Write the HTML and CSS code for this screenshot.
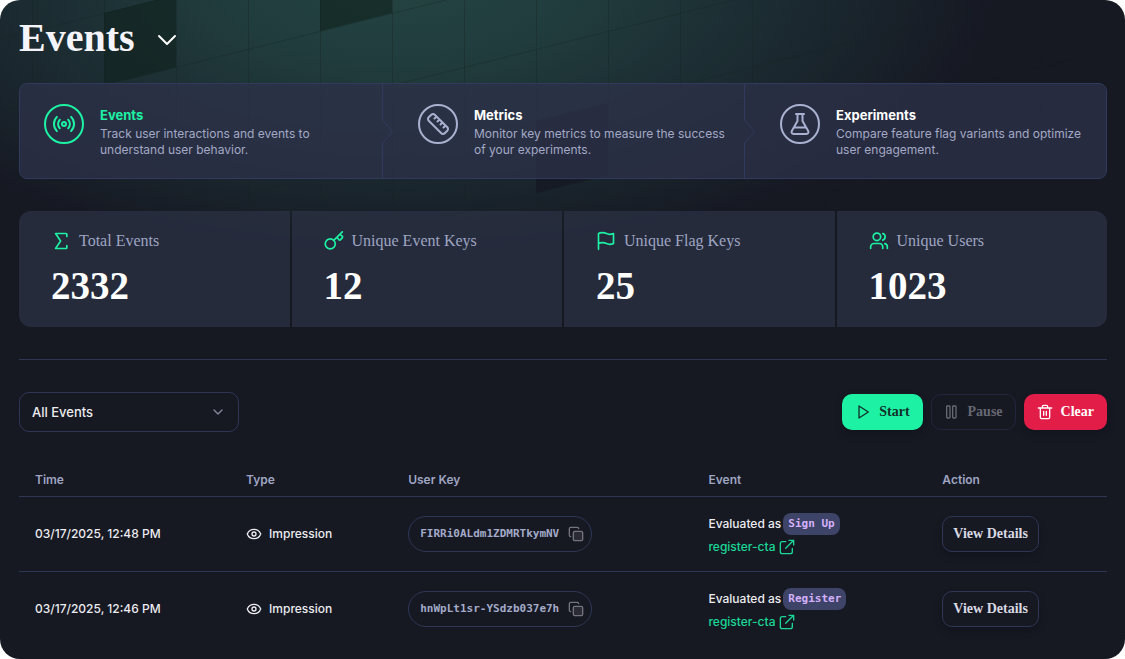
FILE: index.html
```
<!DOCTYPE html>
<html lang="en">
<head>
    <meta charset="UTF-8">
    <meta name="viewport" content="width=device-width, initial-scale=1.0">
    <title>Events</title>
    <link rel="stylesheet" href="styles.css">
</head>
<body>

<!-- Shared icons -->
<svg class="sprite" aria-hidden="true">
    <symbol id="eye" viewBox="0 0 24 24">
        <path d="M2.06 12.35a1 1 0 0 1 0-.7 10.75 10.75 0 0 1 19.88 0 1 1 0 0 1 0 .7 10.75 10.75 0 0 1-19.88 0"/>
        <circle cx="12" cy="12" r="3"/>
    </symbol>
    <symbol id="copy" viewBox="0 0 24 24">
        <rect class="copy-fill" x="8" y="8" width="14" height="14" rx="2"/>
        <path d="M4 16c-1.1 0-2-.9-2-2V4c0-1.1.9-2 2-2h10c1.1 0 2 .9 2 2"/>
    </symbol>
    <symbol id="external" viewBox="0 0 24 24">
        <path d="M10 4H5a3 3 0 0 0-3 3v12a3 3 0 0 0 3 3h12a3 3 0 0 0 3-3v-5M15 2h7v7M22 2 10 14"/>
    </symbol>
    <symbol id="chevron" viewBox="0 0 24 24">
        <path d="m6 9 6 6 6-6"/>
    </symbol>
</svg>

<div class="page">
    <svg class="backdrop" aria-hidden="true">
        <defs>
            <pattern id="grid" x="32" y="39" width="72" height="72" patternUnits="userSpaceOnUse" patternTransform="matrix(1 -0.25 0 1 0 0)">
                <path d="M0 72V0H72" fill="none"/>
            </pattern>
        </defs>
        <rect width="100%" height="100%" fill="url(#grid)"/>
        <g class="tiles" transform="matrix(1 -0.25 0 1 0 0)">
            <rect x="104" y="39" width="72" height="72"/>
            <rect x="320" y="39" width="72" height="72"/>
            <rect x="536" y="255" width="72" height="72"/>
        </g>
    </svg>

    <header class="page-header">
        <h1>Events</h1>
        <button class="title-toggle" type="button" aria-label="Switch page">
            <svg class="icon"><use href="#chevron"/></svg>
        </button>
    </header>

    <nav class="steps">
        <a class="step active" href="#events">
            <span class="step-icon">
                <svg class="icon" viewBox="0 0 24 24"><circle cx="12" cy="12" r="2"/><path d="M4.9 19.1C1 15.2 1 8.8 4.9 4.9M7.8 16.2c-2.3-2.3-2.3-6.1 0-8.5M16.2 7.8c2.3 2.3 2.3 6.1 0 8.5M19.1 4.9C23 8.8 23 15.1 19.1 19"/></svg>
            </span>
            <span class="step-text">
                <strong>Events</strong>
                <span>Track user interactions and events to understand user behavior.</span>
            </span>
        </a>
        <a class="step" href="#metrics">
            <svg class="step-arrow" viewBox="0 0 12 94" preserveAspectRatio="none"><path d="M.5 0V36L10.500 47.500 .5 59V94"/></svg>
            <span class="step-icon">
                <svg class="icon" viewBox="0 0 24 24"><path d="M21.3 15.3a2.4 2.4 0 0 1 0 3.4l-2.6 2.6a2.4 2.4 0 0 1-3.4 0L2.7 8.7a2.4 2.4 0 0 1 0-3.4l2.6-2.6a2.4 2.4 0 0 1 3.4 0ZM14.5 12.5l2-2M11.5 9.5l2-2M8.5 6.5l2-2M17.5 15.5l2-2"/></svg>
            </span>
            <span class="step-text">
                <strong>Metrics</strong>
                <span>Monitor key metrics to measure the success of your experiments.</span>
            </span>
        </a>
        <a class="step" href="#experiments">
            <svg class="step-arrow" viewBox="0 0 12 94" preserveAspectRatio="none"><path d="M.5 0V36L10.500 47.500 .5 59V94"/></svg>
            <span class="step-icon">
                <svg class="icon" viewBox="0 0 24 24"><path d="M9.5 2v7L3.8 19a2 2 0 0 0 1.8 3h12.8a2 2 0 0 0 1.8-3L14.5 9V2M8 2h8M6 15.5h12"/></svg>
            </span>
            <span class="step-text">
                <strong>Experiments</strong>
                <span>Compare feature flag variants and optimize user engagement.</span>
            </span>
        </a>
    </nav>

    <section class="stats">
        <div class="stat">
            <div class="stat-label">
                <svg class="icon" viewBox="0 0 24 24"><path d="M19 6.5V4a1 1 0 0 0-1-1H5.5l6 9-6 9H18a1 1 0 0 0 1-1v-2.5"/></svg>
                Total Events
            </div>
            <div class="stat-value">2332</div>
        </div>
        <div class="stat">
            <div class="stat-label">
                <svg class="icon" viewBox="0 0 24 24"><circle cx="7.5" cy="15.5" r="6"/><path d="m22 1-10 10M15.5 7.5l2.3 2.8a1.5 1.5 0 0 0 2.1 0l1.9-2.1a1.5 1.5 0 0 0 0-2.1L19 4"/></svg>
                Unique Event Keys
            </div>
            <div class="stat-value">12</div>
        </div>
        <div class="stat">
            <div class="stat-label">
                <svg class="icon" viewBox="0 0 24 24"><path d="M3 22V3s1-1 5-1 5 2 8 2 5-1 5-1v12s-2 1-5 1-4-2-8-2-5 1-5 1"/></svg>
                Unique Flag Keys
            </div>
            <div class="stat-value">25</div>
        </div>
        <div class="stat">
            <div class="stat-label">
                <svg class="icon" viewBox="0 0 24 24"><circle cx="9.5" cy="7" r="4.5"/><path d="M16.5 21v-2a4 4 0 0 0-4-4H6a4 4 0 0 0-4 4v2M22 21v-2a4 4 0 0 0-3-3.9M16.5 3a4.2 4.2 0 0 1 0 8"/></svg>
                Unique Users
            </div>
            <div class="stat-value">1023</div>
        </div>
    </section>

    <hr>

    <div class="toolbar">
        <div class="filter">
            <select aria-label="Event type">
                <option>All Events</option>
                <option>Impression</option>
            </select>
            <svg class="icon"><use href="#chevron"/></svg>
        </div>
        <div class="actions">
            <button class="btn btn-start" type="button">
                <svg class="icon" viewBox="0 0 24 24"><path d="m6 3 14 9-14 9z"/></svg>
                Start
            </button>
            <button class="btn btn-pause" type="button" disabled>
                <svg class="icon" viewBox="0 0 24 24"><rect x="4" y="3" width="5" height="18" rx="1"/><rect x="13" y="3" width="5" height="18" rx="1"/></svg>
                Pause
            </button>
            <button class="btn btn-clear" type="button">
                <svg class="icon" viewBox="0 0 24 24"><path d="M2 6h20M19 6v14a2 2 0 0 1-2 2H7a2 2 0 0 1-2-2V6M8 6V4a2 2 0 0 1 2-2h4a2 2 0 0 1 2 2v2M10 11v6M14 11v6"/></svg>
                Clear
            </button>
        </div>
    </div>

    <table class="events">
        <thead>
            <tr>
                <th class="col-time">Time</th>
                <th class="col-type">Type</th>
                <th class="col-key">User Key</th>
                <th class="col-event">Event</th>
                <th>Action</th>
            </tr>
        </thead>
        <tbody>
            <tr>
                <td>03/17/2025, 12:48 PM</td>
                <td><span class="type"><svg class="icon"><use href="#eye"/></svg>Impression</span></td>
                <td>
                    <button class="key" type="button">FIRRi0ALdm1ZDMRTkymNV<svg class="icon"><use href="#copy"/></svg></button>
                </td>
                <td>
                    <div class="evaluated">Evaluated as <span class="variant">Sign Up</span></div>
                    <a class="flag" href="#register-cta">register-cta<svg class="icon"><use href="#external"/></svg></a>
                </td>
                <td><button class="btn btn-outline" type="button">View Details</button></td>
            </tr>
            <tr>
                <td>03/17/2025, 12:46 PM</td>
                <td><span class="type"><svg class="icon"><use href="#eye"/></svg>Impression</span></td>
                <td>
                    <button class="key" type="button">hnWpLt1sr-YSdzb037e7h<svg class="icon"><use href="#copy"/></svg></button>
                </td>
                <td>
                    <div class="evaluated">Evaluated as <span class="variant">Register</span></div>
                    <a class="flag" href="#register-cta">register-cta<svg class="icon"><use href="#external"/></svg></a>
                </td>
                <td><button class="btn btn-outline" type="button">View Details</button></td>
            </tr>
        </tbody>
    </table>
</div>

</body>
</html>
```
FILE: styles.css
```
* {
    box-sizing: border-box;
}

body {
    margin: 0;
    background-color: #fff;
    color: #ececf0;
    font-family: Inter, sans-serif;
    font-size: 12px;
    line-height: 16px;
}

button, select {
    font: inherit;
    color: inherit;
    cursor: pointer;
}

.sprite {
    display: none;
}

.icon {
    width: 16px;
    height: 16px;
    flex: none;
    fill: none;
    stroke: currentColor;
    stroke-width: 2;
    stroke-linecap: round;
    stroke-linejoin: round;
}

.page {
    position: relative;
    min-height: 100vh;
    padding: 14px 18px 12px 19px;
    border-radius: 20px;
    overflow: hidden;
    background: radial-gradient(ellipse 600px 280px at 400px -20px, #244442 0%, #213c3d 30%, #1b2a30 66%, #161822 100%) #161822;
}

/* Slanted grid behind the header */
.backdrop {
    position: absolute;
    top: 0;
    left: 0;
    width: 100%;
    height: 220px;
    mask-image: radial-gradient(ellipse 700px 280px at 400px 0, #000 65%, transparent 100%);
}

.backdrop path {
    stroke: #14241f;
    stroke-opacity: 0.7;
}

.tiles {
    fill: #0f211c;
    fill-opacity: 0.6;
}

.tiles rect:last-child {
    fill: #12131f;
}

.page-header, .steps, .stats, .toolbar, .events {
    position: relative;
}

.page-header {
    display: flex;
    align-items: center;
    gap: 16px;
    height: 48px;
    margin-bottom: 21px;
}

h1 {
    margin: 0;
    color: #f4f4fa;
    font-family: "Liberation Serif", serif;
    font-size: 40px;
    line-height: 48px;
}

.title-toggle {
    display: flex;
    padding: 4px 0 0;
    border: none;
    background: none;
    color: #fff;
}

.title-toggle .icon {
    width: 32px;
    height: 32px;
    stroke-width: 1.5;
}

/* Steps */
.steps {
    display: grid;
    grid-template-columns: repeat(3, 1fr);
    min-height: 96px;
    border: 1px solid #313a5c;
    border-radius: 8px;
    background-color: rgba(46, 50, 74, 0.75);
}

.step {
    position: relative;
    display: flex;
    gap: 16px;
    padding: 20px 16px 20px 24px;
    color: #a3a9c6;
    text-decoration: none;
}

.step + .step {
    padding-left: 36px;
}

.step-arrow {
    position: absolute;
    left: 0;
    top: 0;
    width: 12px;
    height: 100%;
    fill: none;
    stroke: #313a5c;
}

.step-icon {
    display: flex;
    align-items: center;
    justify-content: center;
    flex: none;
    width: 40px;
    height: 40px;
    border: 2px solid #a9b1d0;
    border-radius: 50%;
    color: #a9b1d0;
}

.step-icon .icon {
    width: 24px;
    height: 24px;
}

.step-text {
    max-width: 256px;
}

.step-text strong {
    display: block;
    color: #fff;
    font-size: 13px;
    line-height: 22px;
}

.step.active .step-icon, .step.active strong {
    border-color: #1df2a4;
    color: #1df2a4;
}

/* Stats */
.stats {
    display: grid;
    grid-template-columns: repeat(4, 1fr);
    gap: 2px;
    margin: 32px 0;
    border-radius: 12px;
    overflow: hidden;
}

.stat {
    padding: 18px 32px;
    background-color: rgba(43, 49, 68, 0.75);
    font-family: "Liberation Serif", serif;
}

.stat-label {
    display: flex;
    align-items: center;
    gap: 8px;
    color: #9fa5c3;
    font-size: 16px;
    line-height: 24px;
}

.stat-label .icon {
    width: 20px;
    height: 20px;
    color: #1df2a4;
}

.stat-value {
    margin-top: 10px;
    color: #fff;
    font-size: 39px;
    font-weight: bold;
    line-height: 46px;
}

hr {
    margin: 0 0 32px;
    border: none;
    border-top: 1px solid #2d3652;
}

/* Toolbar */
.toolbar {
    display: flex;
    align-items: center;
    justify-content: space-between;
    margin-bottom: 32px;
}

.filter {
    position: relative;
    width: 220px;
}

.filter select {
    width: 100%;
    height: 40px;
    padding: 0 12px;
    border: 1px solid #2f3757;
    border-radius: 10px;
    background: none;
    font-size: 13px;
    font-weight: 500;
    appearance: none;
}

.filter .icon {
    position: absolute;
    right: 13px;
    top: 12px;
    color: #85889b;
    pointer-events: none;
}

.actions {
    display: flex;
    gap: 8px;
}

.btn {
    display: inline-flex;
    align-items: center;
    height: 36px;
    gap: 8px;
    padding: 0 12px;
    border: 1px solid transparent;
    border-radius: 10px;
    font-family: "Liberation Serif", serif;
    font-size: 14px;
    font-weight: bold;
    box-shadow: 0 4px 8px rgba(0, 0, 0, 0.15);
}

.btn-start {
    background-color: #1df2a4;
    color: #11302a;
}

.btn-pause {
    border-color: #22263a;
    background: none;
    color: #666873;
    box-shadow: none;
}

.btn-clear {
    background-color: #e21d48;
    color: #fff;
}

.btn-outline {
    padding: 0 10px;
    border-color: #2f3757;
    background-color: #161822;
    color: #d8d9e3;
}

/* Events table */
.events {
    width: 100%;
    border-collapse: collapse;
    table-layout: fixed;
    font-weight: 500;
}

.events th {
    height: 32px;
    padding: 0 16px;
    color: #9fa5c3;
    font-weight: 600;
    text-align: left;
}

.events td {
    height: 75px;
    padding: 0 16px;
}

.events thead tr, .events tbody tr:not(:last-child) {
    border-bottom: 1px solid #2f3757;
}

.col-time {
    width: 19.4%;
}

.col-type {
    width: 14.9%;
}

.col-key {
    width: 27.6%;
}

.col-event {
    width: 21.5%;
}

.type {
    display: flex;
    align-items: center;
    gap: 7px;
}

.key {
    display: inline-flex;
    align-items: center;
    gap: 9px;
    height: 36px;
    padding: 0 7px 0 11px;
    border: 1px solid #2f3757;
    border-radius: 18px;
    background: none;
    color: #a3abc9;
    font-family: "DejaVu Sans Mono", monospace;
    font-size: 11px;
    font-weight: bold;
}

.key .icon {
    color: #73747e;
}

.copy-fill {
    fill: #2a2b35;
}

.evaluated {
    display: flex;
    align-items: center;
    gap: 2px;
    margin-top: 4px;
    line-height: 22px;
}

.variant {
    padding: 0 5px;
    border-radius: 8px;
    background-color: #3d4468;
    color: #d5b0fa;
    font-family: "DejaVu Sans Mono", monospace;
    font-size: 11px;
    font-weight: bold;
}

.flag {
    display: flex;
    align-items: center;
    gap: 4px;
    height: 24px;
    color: #1bd796;
    text-decoration: none;
}
```
